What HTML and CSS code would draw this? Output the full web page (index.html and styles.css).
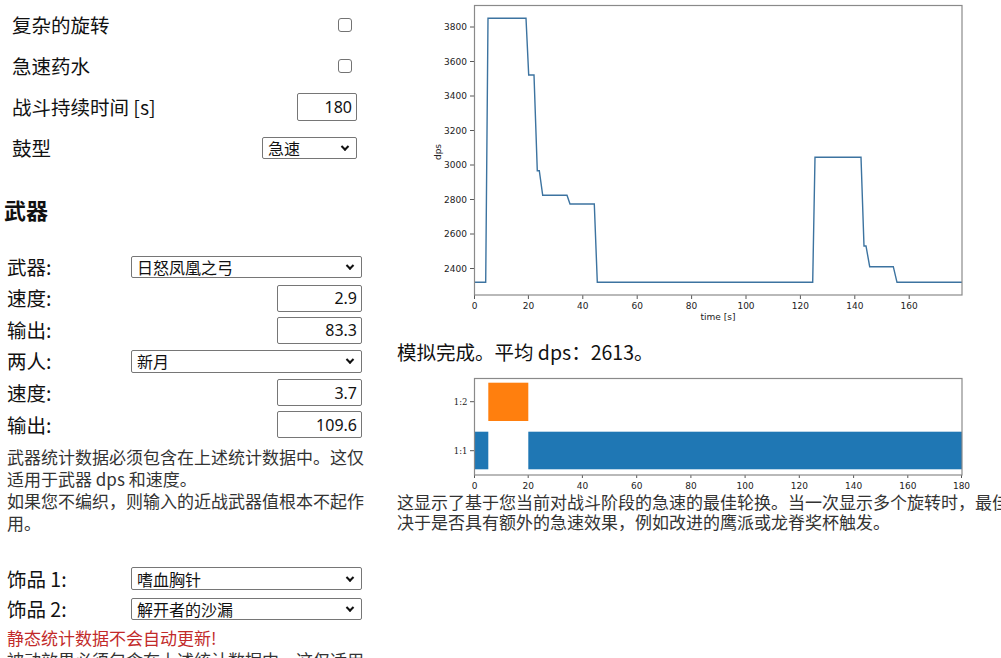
FILE: index.html
```html
<!DOCTYPE html>
<html lang="zh-CN">
<head>
<meta charset="UTF-8">
<meta name="viewport" content="width=device-width, initial-scale=1.0">
<title>模拟器</title>
<link rel="stylesheet" href="styles.css">
</head>
<body>

<div class="page">
  <aside class="sidebar">
    <div class="settings">
      <label class="setting"><span>复杂的旋转</span><input class="check" type="checkbox"></label>
      <label class="setting"><span>急速药水</span><input class="check" type="checkbox"></label>
      <label class="setting"><span>战斗持续时间 [s]</span><input class="num short" type="text" value="180"></label>
      <label class="setting"><span>鼓型</span>
        <span class="select drums"><select><option>急速</option><option>无</option></select></span>
      </label>
    </div>

    <h3 class="section-title">武器</h3>

    <div class="gear">
      <div class="row sel"><span class="lbl">武器:</span>
        <span class="select"><select><option>日怒凤凰之弓</option><option>其他</option></select></span>
      </div>
      <div class="row inp"><span class="lbl">速度:</span><input class="num" type="text" value="2.9"></div>
      <div class="row inp"><span class="lbl">输出:</span><input class="num" type="text" value="83.3"></div>
      <div class="row sel"><span class="lbl">两人:</span>
        <span class="select"><select><option>新月</option><option>其他</option></select></span>
      </div>
      <div class="row inp"><span class="lbl">速度:</span><input class="num" type="text" value="3.7"></div>
      <div class="row inp"><span class="lbl">输出:</span><input class="num" type="text" value="109.6"></div>
    </div>

    <p class="hint">武器统计数据必须包含在上述统计数据中。这仅适用于武器 dps 和速度。<br>如果您不编织，则输入的近战武器值根本不起作用。</p>

    <div class="gear trinkets">
      <div class="row sel"><span class="lbl">饰品 1:</span>
        <span class="select"><select><option>嗜血胸针</option></select></span>
      </div>
      <div class="row sel"><span class="lbl">饰品 2:</span>
        <span class="select"><select><option>解开者的沙漏</option></select></span>
      </div>
    </div>
    <p class="warning">静态统计数据不会自动更新!</p>
    <p class="hint">被动效果必须包含在上述统计数据中。这仅适用于饰品的被动属性。</p>
  </aside>

  <main class="results">
    <svg class="chart chart-main" width="604" height="330" viewBox="397 0 604 330">
      <g class="tick">
        <line x1="470" y1="27" x2="474" y2="27"/>
        <line x1="470" y1="61.5" x2="474" y2="61.5"/>
        <line x1="470" y1="96" x2="474" y2="96"/>
        <line x1="470" y1="130.5" x2="474" y2="130.5"/>
        <line x1="470" y1="165" x2="474" y2="165"/>
        <line x1="470" y1="199.5" x2="474" y2="199.5"/>
        <line x1="470" y1="234" x2="474" y2="234"/>
        <line x1="470" y1="268.5" x2="474" y2="268.5"/>
        <line x1="474.5" y1="295" x2="474.5" y2="299"/>
        <line x1="528.4" y1="295" x2="528.4" y2="299"/>
        <line x1="582.8" y1="295" x2="582.8" y2="299"/>
        <line x1="637.2" y1="295" x2="637.2" y2="299"/>
        <line x1="691.6" y1="295" x2="691.6" y2="299"/>
        <line x1="746" y1="295" x2="746" y2="299"/>
        <line x1="800.4" y1="295" x2="800.4" y2="299"/>
        <line x1="854.8" y1="295" x2="854.8" y2="299"/>
        <line x1="909.2" y1="295" x2="909.2" y2="299"/>
      </g>
      <g class="ylabels">
        <text x="467" y="30.2">3800</text>
        <text x="467" y="64.7">3600</text>
        <text x="467" y="99.2">3400</text>
        <text x="467" y="133.7">3200</text>
        <text x="467" y="168.2">3000</text>
        <text x="467" y="202.7">2800</text>
        <text x="467" y="237.2">2600</text>
        <text x="467" y="271.7">2400</text>
      </g>
      <g class="xlabels">
        <text x="474.5" y="308.5">0</text>
        <text x="528.4" y="308.5">20</text>
        <text x="582.8" y="308.5">40</text>
        <text x="637.2" y="308.5">60</text>
        <text x="691.6" y="308.5">80</text>
        <text x="746" y="308.5">100</text>
        <text x="800.4" y="308.5">120</text>
        <text x="854.8" y="308.5">140</text>
        <text x="909.2" y="308.5">160</text>
      </g>
      <text class="axis-label" transform="translate(441 152) rotate(-90)">dps</text>
      <text class="axis-label" x="718" y="320">time [s]</text>
      <polyline class="dps-line" points="474.5,282.3 485.7,282.3 488,18.3 526,18.3 528.7,75 534,75 537.3,170.7 539.3,170.7 542.7,195.3 567,195.3 570,204 594.3,204 597.3,282.3 812.7,282.3 815,157.3 861,157.3 864,246 866,246 869.7,266.7 893.3,266.7 897,282.3 962,282.3"/>
      <rect class="frame" x="474.5" y="5.5" width="487.5" height="289.5"/>
    </svg>

    <p class="result">模拟完成。平均 dps：2613。</p>

    <svg class="chart chart-rot" width="604" height="128" viewBox="397 364 604 128">
      <rect class="bar-haste" x="488.3" y="382.7" width="40" height="38.3"/>
      <rect class="bar-base" x="474.5" y="431.7" width="13.8" height="37.6"/>
      <rect class="bar-base" x="528.3" y="431.7" width="433.7" height="37.6"/>
      <g class="tick">
        <line x1="470" y1="401.7" x2="474" y2="401.7"/>
        <line x1="470" y1="450.7" x2="474" y2="450.7"/>
        <line x1="474.5" y1="475" x2="474.5" y2="478"/>
        <line x1="528.2" y1="475" x2="528.2" y2="478"/>
        <line x1="582.4" y1="475" x2="582.4" y2="478"/>
        <line x1="636.7" y1="475" x2="636.7" y2="478"/>
        <line x1="690.9" y1="475" x2="690.9" y2="478"/>
        <line x1="745.1" y1="475" x2="745.1" y2="478"/>
        <line x1="799.3" y1="475" x2="799.3" y2="478"/>
        <line x1="853.6" y1="475" x2="853.6" y2="478"/>
        <line x1="907.8" y1="475" x2="907.8" y2="478"/>
        <line x1="961.5" y1="475" x2="961.5" y2="478"/>
      </g>
      <g class="ylabels serif">
        <text x="467.5" y="405">1:2</text>
        <text x="467.5" y="454">1:1</text>
      </g>
      <g class="xlabels">
        <text x="474.5" y="488.5">0</text>
        <text x="528.2" y="488.5">20</text>
        <text x="582.4" y="488.5">40</text>
        <text x="636.7" y="488.5">60</text>
        <text x="690.9" y="488.5">80</text>
        <text x="745.1" y="488.5">100</text>
        <text x="799.3" y="488.5">120</text>
        <text x="853.6" y="488.5">140</text>
        <text x="907.8" y="488.5">160</text>
        <text x="961.5" y="488.5">180</text>
      </g>
      <rect class="frame" x="474.5" y="378.5" width="487.5" height="96.5"/>
    </svg>

    <p class="note">这显示了基于您当前对战斗阶段的急速的最佳轮换。当一次显示多个旋转时，最佳轮换取决于是否具有额外的急速效果，例如改进的鹰派或龙脊奖杯触发。</p>
  </main>
</div>

</body>
</html>
```

FILE: styles.css
```css
html, body {
  overflow: hidden;
}
body {
  margin: 0;
  padding: 0 0 0 4px;
  background-color: #fff;
  color: #111;
  font-family: "Noto Sans CJK SC", sans-serif;
  text-spacing-trim: space-all;
}
.page {
  display: flex;
  align-items: flex-start;
}

/* colonne de gauche */
.sidebar {
  width: 362px;
  flex-shrink: 0;
  padding-top: 4.5px;
}
.settings {
  padding: 0 9px 0 8px;
}
.setting {
  display: flex;
  align-items: center;
  justify-content: space-between;
  height: 41px;
  font-size: 19.5px;
  line-height: 26px;
}
.check {
  appearance: none;
  -webkit-appearance: none;
  box-sizing: border-box;
  width: 14px;
  height: 14px;
  margin: 0 5px 0 0;
  border: 1px solid #737373;
  border-radius: 3px;
  background-color: #fff;
}
.section-title {
  font-size: 22px;
  line-height: 26px;
  font-weight: bold;
  margin: 27.5px 0 29.5px;
}
.gear {
  padding: 0 4px 0 3px;
}
.row {
  display: grid;
  grid-template-columns: 124px 1fr;
  align-items: center;
  font-size: 19.5px;
  line-height: 26px;
}
.row.sel {
  height: 30.5px;
}
.row.inp {
  height: 32px;
}
.row .num {
  justify-self: end;
}
.num {
  box-sizing: border-box;
  width: 85px;
  height: 27px;
  border: 1px solid #767676;
  border-radius: 2px;
  padding: 0 4px;
  margin: 0;
  text-align: right;
  font-family: "Noto Sans", sans-serif;
  font-size: 16px;
  color: #111;
}
.num.short {
  width: 60px;
  height: 28px;
}
.select {
  position: relative;
  display: block;
}
.select select {
  appearance: none;
  -webkit-appearance: none;
  box-sizing: border-box;
  display: block;
  width: 100%;
  height: 22.5px;
  border: 1px solid #767676;
  border-radius: 2px;
  background-color: #fff;
  padding: 0 24px 0 5px;
  margin: 0;
  font-family: "Noto Sans CJK SC", sans-serif;
  font-size: 16px;
  line-height: 20px;
  color: #111;
}
.select::after {
  content: "";
  position: absolute;
  right: 9px;
  top: 50%;
  width: 4px;
  height: 4px;
  border-right: 2px solid #111;
  border-bottom: 2px solid #111;
  transform: translateY(-72%) rotate(45deg);
  pointer-events: none;
}
.select.drums {
  width: 95px;
}
.hint {
  margin: 5px 0 0;
  padding-left: 3px;
  font-size: 17px;
  line-height: 22px;
  color: #333;
}
.trinkets {
  margin-top: 29.75px;
}
.warning {
  margin: 2.25px 0 0;
  padding-left: 3px;
  font-size: 17px;
  line-height: 22px;
  color: #c22a2a;
}
.warning + .hint {
  margin-top: 0;
}

/* colonne de droite */
.results {
  width: 670px;
  flex-shrink: 0;
  margin-left: 31px;
}
.chart {
  display: block;
}
.chart text {
  font-family: "DejaVu Sans", sans-serif;
  font-size: 9px;
  fill: #222;
}
.chart .ylabels text {
  text-anchor: end;
}
.chart .ylabels.serif text {
  font-family: "DejaVu Serif", serif;
  font-size: 8.5px;
}
.chart .xlabels text,
.chart .axis-label {
  text-anchor: middle;
}
.tick line {
  stroke: #444;
  stroke-width: 0.9;
}
.frame {
  fill: none;
  stroke: #8a8a8a;
  stroke-width: 1.2;
}
.dps-line {
  fill: none;
  stroke: #3c73a0;
  stroke-width: 1.4;
}
.bar-haste {
  fill: #ff7f0e;
}
.bar-base {
  fill: #1f77b4;
}
.result {
  margin: 10px 0 0;
  font-size: 19.5px;
  line-height: 24px;
  color: #111;
}
.note {
  margin: 0;
  font-size: 17px;
  line-height: 20px;
  color: #333;
}
```
